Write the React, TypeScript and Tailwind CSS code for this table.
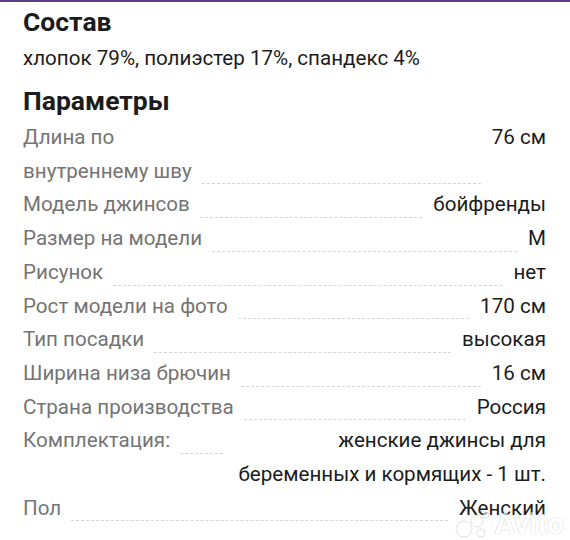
import React from "react";

type Param = { label: React.ReactNode; value: React.ReactNode };

const params: Param[] = [
  { label: <>Длина по<br />внутреннему шву</>, value: "76 см" },
  { label: "Модель джинсов", value: "бойфренды" },
  { label: "Размер на модели", value: "M" },
  { label: "Рисунок", value: "нет" },
  { label: "Рост модели на фото", value: "170 см" },
  { label: "Тип посадки", value: "высокая" },
  { label: "Ширина низа брючин", value: "16 см" },
  { label: "Страна производства", value: "Россия" },
  { label: "Комплектация:", value: "женские джинсы для беременных и кормящих - 1 шт." },
  { label: "Пол", value: "Женский" },
];

function Row({ label, value }: Param) {
  return (
    <div className="flex items-start">
      <div className="flex min-w-0 flex-1 items-end">
        <span className="shrink-0 text-[#747474]">{label}</span>
        <div className="mb-[4px] ml-[10px] mr-[11px] flex-1 border-b border-dashed border-[#d6d6d6]" />
      </div>
      <div className="max-w-[312px] text-right text-[#1c1c1c]">{value}</div>
    </div>
  );
}

export default function App() {
  return (
    <div
      className="relative h-[540px] w-[570px] overflow-hidden bg-white"
      style={{ fontFamily: "Roboto, 'Noto Sans', sans-serif" }}
    >
      <div className="h-[2px] bg-[#5b3f82]" />
      <div className="pl-[23px] pr-[24px] pt-[5px]">
        <h2 className="text-[26.5px] font-bold leading-[30px] text-[#1c1c1c]">Состав</h2>
        <p className="mt-[4px] text-[20.6px] leading-[34px] text-[#1c1c1c]">
          хлопок 79%, полиэстер 17%, спандекс 4%
        </p>
        <h2 className="mt-[11px] text-[26.5px] font-bold leading-[30px] text-[#1c1c1c]">Параметры</h2>
        <div className="mt-[5px] flex flex-col text-[20.6px] leading-[33.7px]">
          {params.map((p, i) => (
            <Row key={i} label={p.label} value={p.value} />
          ))}
        </div>
      </div>

      {/* watermark */}
      <div className="pointer-events-none absolute bottom-[-6px] right-[6px] flex items-center gap-1 opacity-60">
        <svg width="36" height="30" viewBox="0 0 36 30">
          <circle cx="9" cy="20" r="8" fill="white" stroke="#d0d0d0" strokeWidth="1" />
          <circle cx="22" cy="12" r="6" fill="white" stroke="#d0d0d0" strokeWidth="1" />
          <circle cx="26" cy="24" r="4" fill="white" stroke="#d0d0d0" strokeWidth="1" />
          <circle cx="31" cy="6" r="3" fill="white" stroke="#d0d0d0" strokeWidth="1" />
        </svg>
        <span
          className="text-[30px] font-bold text-white"
          style={{ textShadow: "0 0 1px #b0b0b0, 0 0 1px #b0b0b0" }}
        >
          Avito
        </span>
      </div>
    </div>
  );
}
